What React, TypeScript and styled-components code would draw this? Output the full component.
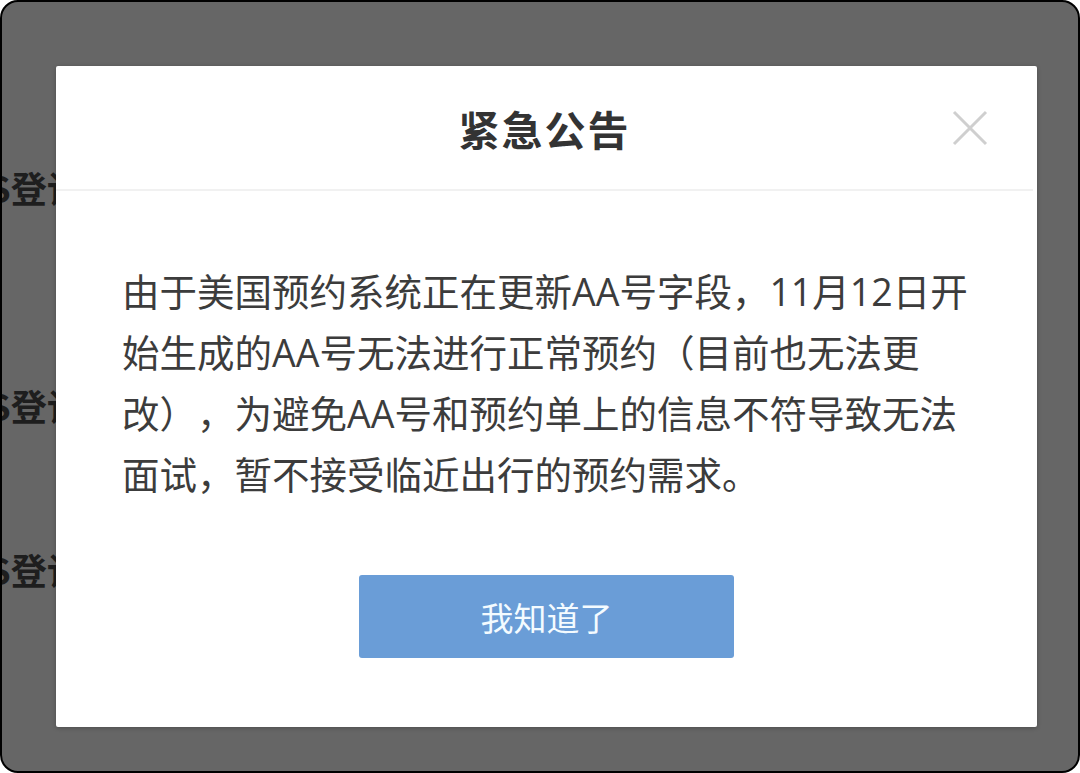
import React from "react";
import styled, { createGlobalStyle } from "styled-components";

const Global = createGlobalStyle`
  html, body { margin: 0; padding: 0; background: #ffffff; }
  body { font-family: "Noto Sans CJK SC", "Noto Sans", sans-serif; }
  * { box-sizing: border-box; }
`;

const Frame = styled.div`
  position: relative;
  width: 1080px;
  height: 773px;
  border: 2px solid #000;
  border-radius: 18px;
  background: #666666;
  overflow: hidden;
`;

const Page = styled.div`
  display: flex;
  flex-direction: column;
  padding-top: 160px;
  gap: 168px;
`;

const PageRow = styled.div<{ $gap?: number }>`
  height: 50px;
  margin-left: -63px;
  margin-top: ${(p) => p.$gap ?? 0}px;
  font-size: 36px;
  font-weight: 700;
  line-height: 50px;
  color: #1e1e1e;
  white-space: nowrap;
`;

const Modal = styled.div`
  position: absolute;
  left: 54px;
  top: 64px;
  width: 981px;
  height: 661px;
  background: #fff;
  border-radius: 2px;
  box-shadow: 0 1px 4px rgba(0, 0, 0, 0.25);
  display: flex;
  flex-direction: column;
`;

const Header = styled.div`
  position: relative;
  height: 125px;
  display: flex;
  align-items: center;
  justify-content: center;
  border-bottom: 2px solid #f1f1f1;
  margin-right: 4px;
`;

const Title = styled.h1`
  margin: 0;
  font-size: 41px;
  font-weight: 700;
  color: #333;
  letter-spacing: 2px;
`;

const Close = styled.button`
  position: absolute;
  right: 44px;
  top: 43px;
  width: 38px;
  height: 38px;
  padding: 0;
  border: none;
  background: transparent;
  display: flex;
  align-items: center;
  justify-content: center;
`;

const Body = styled.div`
  padding: 70px 0 0 66px;
  font-family: "Open Sans", "Noto Sans CJK SC", sans-serif;
  font-size: 37.5px;
  line-height: 61px;
  color: #3c3c3c;
  text-spacing-trim: space-all;
  white-space: nowrap;
`;

const Footer = styled.div`
  display: flex;
  justify-content: center;
  padding-top: 70px;
`;

const OkButton = styled.button`
  width: 375px;
  height: 83px;
  border: none;
  border-radius: 3px;
  background: #6a9dd7;
  color: #f4fbff;
  font-family: "Noto Sans CJK SC", sans-serif;
  font-size: 33px;
`;

export default function App() {
  return (
    <>
      <Global />
      <Frame>
        <Page>
          <PageRow>CDS登记</PageRow>
          <PageRow>CDS登记</PageRow>
          <PageRow $gap={-54}>CDS登记</PageRow>
        </Page>
        <Modal>
          <Header>
            <Title>紧急公告</Title>
            <Close aria-label="关闭">
              <svg width="36" height="36" viewBox="0 0 36 36">
                <path d="M2 2 L34 34 M34 2 L2 34" stroke="#cfcfcf" strokeWidth="3" fill="none" />
              </svg>
            </Close>
          </Header>
          <Body>
            由于美国预约系统正在更新AA号字段，11月12日开
            <br />
            始生成的AA号无法进行正常预约（目前也无法更
            <br />
            改），为避免AA号和预约单上的信息不符导致无法
            <br />
            面试，暂不接受临近出行的预约需求。
          </Body>
          <Footer>
            <OkButton>我知道了</OkButton>
          </Footer>
        </Modal>
      </Frame>
    </>
  );
}
